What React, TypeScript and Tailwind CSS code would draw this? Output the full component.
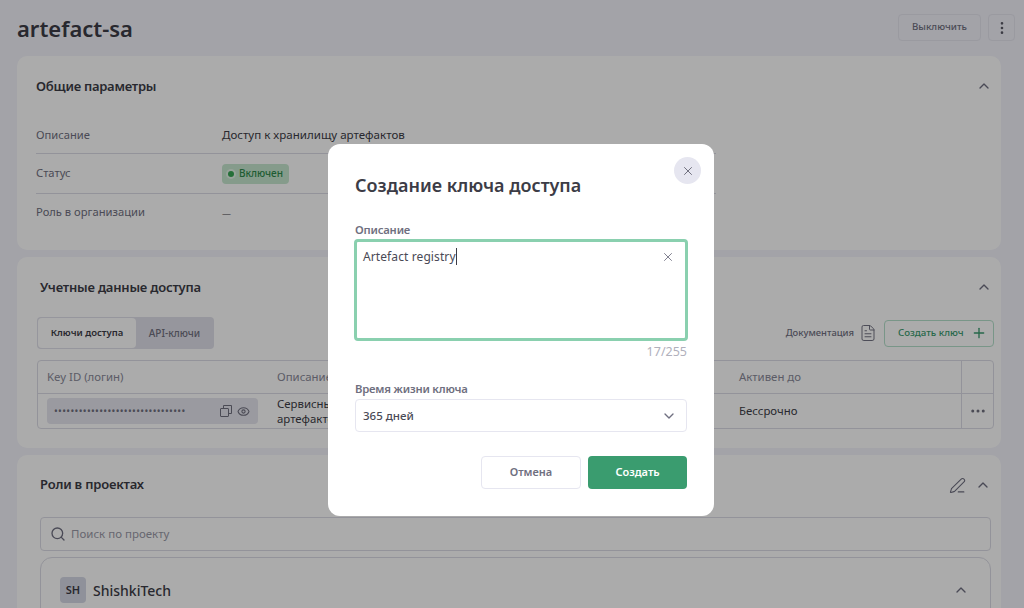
import React from 'react';
import { ChevronUp, ChevronDown, X, Plus, Search, PenLine, Eye, FileText, MoreVertical, MoreHorizontal } from 'lucide-react';

const font = "font-['Noto_Sans',sans-serif]";

const ParamRow = ({ label, children, className }: { label: string; children: React.ReactNode; className: string }) => (
  <div className={`flex items-center ${className}`}>
    <div className="w-[186px] text-[11.2px] text-[#6f6f80]">{label}</div>
    <div className="text-[11.55px] text-[#3c3c46]">{children}</div>
  </div>
);

export default function App() {
  return (
    <div className={`relative h-[608px] w-[1024px] overflow-hidden bg-[#f3f3fb] ${font}`}>
      <div className="pl-[17px]">
        {/* Шапка */}
        <div className="flex items-center justify-between h-[56px] pr-[9px]">
          <h1 className="text-[22px] font-semibold text-[#3c3c46]">artefact-sa</h1>
          <div className="flex gap-[7px] -mt-[1px]">
            <button className="h-[27px] w-[83px] rounded border border-[#e6e6ef] text-[9.7px] font-medium text-[#70707f]">Выключить</button>
            <button className="h-[27px] w-[27px] rounded border border-[#e6e6ef] flex items-center justify-center text-[#5a5a66]">
              <MoreVertical size={16} />
            </button>
          </div>
        </div>

        <div className="flex flex-col gap-[7px] w-[984px]">
          {/* Общие параметры */}
          <section className="h-[194px] rounded-[10px] bg-white pl-[19px] pr-[9px]">
            <div className="flex items-center justify-between h-[60px]">
              <h2 className="mt-[1px] text-[13px] tracking-[-0.25px] font-semibold text-[#3c3c46]">Общие параметры</h2>
              <ChevronUp size={16} className="text-[#6f6f80]" />
            </div>
            <div className="w-[680px]">
              <ParamRow label="Описание" className="h-[38px] pt-[1px] border-b border-[#dcdce6]">Доступ к хранилищу артефактов</ParamRow>
              <ParamRow label="Статус" className="h-[40px] border-b border-[#dcdce6]">
                <span className="inline-flex h-[20px] w-[67px] items-center gap-[5px] rounded bg-[#c6e8cf] px-[6px] text-[10px] font-medium text-[#2f8a4c]">
                  <span className="h-[6px] w-[6px] rounded-full bg-[#37a654] ring-2 ring-white/50" />
                  Включен
                </span>
              </ParamRow>
              <ParamRow label="Роль в организации" className="h-[37px]"><span className="text-[9px]">—</span></ParamRow>
            </div>
          </section>

          {/* Учетные данные */}
          <section className="h-[191px] rounded-[10px] bg-white pl-[20px] pr-[7px]">
            <div className="flex items-center justify-between h-[60px] pr-[2px]">
              <h2 className="ml-[3px] mt-[1px] text-[13px] tracking-[-0.2px] font-semibold text-[#3c3c46]">Учетные данные доступа</h2>
              <ChevronUp size={16} className="text-[#6f6f80]" />
            </div>
            <div className="flex items-center justify-between">
              <div className="flex h-[32px] w-[177px] rounded bg-[#e0e0ea] p-[1px]">
                <div className="flex w-[98px] items-center justify-center rounded-sm bg-white text-[9.5px] font-semibold text-[#3c3c46]">Ключи доступа</div>
                <div className="flex flex-1 items-center justify-center text-[10px] font-medium text-[#70707f]">API-ключи</div>
              </div>
              <div className="flex items-center">
                <span className="text-[9.4px] font-medium text-[#70707f]">Документация</span>
                <FileText size={18} className="ml-[5px] text-[#70707f]" strokeWidth={1.3} />
                <button className="ml-[7px] flex h-[27px] w-[110px] items-center gap-[7px] rounded border border-[#b5e0cb] pl-[13px] text-[9.7px] font-medium text-[#3a9c6f]">
                  Создать ключ
                  <Plus size={16} />
                </button>
              </div>
            </div>
            <div className="mt-[11px] rounded border border-[#dcdce6] text-[11.4px]">
              <div className="flex h-[33px] items-center border-b border-[#dcdce6] text-[#8a8a99]">
                <div className="w-[230px] pl-[9px]">Key ID (логин)</div>
                <div className="w-[462px] pl-[9px]">Описание</div>
                <div className="w-[231px] pl-[9px]">Активен до</div>
                <div className="h-full flex-1 border-l border-[#dcdce6]" />
              </div>
              <div className="flex h-[34px] items-center text-[#3c3c46]">
                <div className="w-[230px] pl-[9px]">
                  <div className="flex h-[26px] w-[211px] items-center justify-between rounded bg-[#e6e6ef] pl-[7px] pr-[8px] text-[#70707f]">
                    <span className="text-[10px] tracking-[0.35px] leading-none">••••••••••••••••••••••••••••••••</span>
                    <span className="flex items-center gap-[5px]">
                      <svg width="12" height="12" viewBox="0 0 12 12" fill="none" stroke="currentColor" strokeWidth="1">
                        <rect x="0.5" y="3.5" width="8" height="8" rx="0.5" />
                        <path d="M3.5 3.5V0.5H11.5V8.5H8.5" />
                      </svg>
                      <Eye size={13} />
                    </span>
                  </div>
                </div>
                <div className="w-[462px] pl-[9px] text-[11.4px] leading-[15px]">
                  <div>Сервисный</div>
                  <div>артефактов</div>
                </div>
                <div className="w-[231px] pl-[9px]">Бессрочно</div>
                <div className="flex h-full flex-1 items-center justify-center border-l border-[#dcdce6] text-[#70707f]">
                  <MoreHorizontal size={18} />
                </div>
              </div>
            </div>
          </section>

          {/* Роли в проектах */}
          <section className="h-[300px] rounded-[10px] bg-white pl-[23px] pr-[10px]">
            <div className="flex items-center justify-between h-[62px] pb-[2px]">
              <h2 className="text-[13px] tracking-[-0.2px] font-semibold text-[#3c3c46]">Роли в проектах</h2>
              <div className="flex items-center gap-[9px] text-[#6f6f80]">
                <PenLine size={17} strokeWidth={1.5} />
                <ChevronUp size={16} />
              </div>
            </div>
            <div className="flex h-[34px] items-center gap-[5px] rounded border border-[#dcdce6] pl-[9px] text-[11.5px] text-[#9a9aa8]">
              <Search size={16} className="text-[#6f6f80]" />
              Поиск по проекту
            </div>
            <div className="mt-[6px] h-[120px] rounded-xl border border-[#dcdce6] pl-[19px] pr-[21px] pt-[19px]">
              <div className="flex items-center justify-between">
                <div className="flex items-center gap-[7px]">
                  <span className="flex h-[26px] w-[26px] items-center justify-center rounded bg-[#d5d8e6] text-[11px] font-semibold text-[#3c3c46]">SH</span>
                  <span className="text-[14px] font-medium text-[#3c3c46]">ShishkiTech</span>
                </div>
                <ChevronUp size={16} className="text-[#6f6f80]" />
              </div>
            </div>
          </section>
        </div>
      </div>

      {/* Затемнение */}
      <div className="absolute inset-0 bg-black/[0.33]" />

      {/* Модальное окно */}
      <div className="absolute left-[328px] top-[144px] h-[372px] w-[386px] rounded-xl bg-white pl-[27px] pr-[27px]">
        <button className="absolute right-[13px] top-[13px] flex h-[27px] w-[27px] items-center justify-center rounded-full bg-[#e6e6f0] text-[#5f5f6e]">
          <X size={14} strokeWidth={1.5} />
        </button>
        <h3 className="pt-[28px] text-[18px] leading-[26px] font-semibold text-[#3c3c46]">Создание ключа доступа</h3>
        <label className="mt-[24px] block text-[11.3px] tracking-[-0.2px] leading-[16px] font-semibold text-[#6f6f80]">Описание</label>
        <div className="relative -mx-[1px] mt-[1px] h-[102px] rounded border-[3px] border-[#8ad0af] px-[6px] py-[6px] text-[12px] tracking-[0.1px] text-[#4a4a56]">
          <span className="border-r border-[#3c3c46]">Artefact registry</span>
          <X size={14} strokeWidth={1.5} className="absolute right-[10px] top-[8px] text-[#6f6f80]" />
        </div>
        <div className="mt-[3px] text-right text-[12.5px] leading-[15px] text-[#b0b0bc]">17/255</div>
        <label className="mt-[22px] block text-[11.3px] tracking-[-0.2px] leading-[16px] font-semibold text-[#6f6f80]">Время жизни ключа</label>
        <div className="mt-[2px] flex h-[33px] items-center justify-between rounded border border-[#e6e6f0] pl-[7px] pr-[9px] text-[11.5px] font-medium text-[#4a4a56]">
          365 дней
          <ChevronDown size={16} className="text-[#6f6f80]" />
        </div>
        <div className="mt-[24px] flex justify-end gap-[7px]">
          <button className="h-[33px] w-[100px] rounded border border-[#e6e6f0] text-[11px] font-semibold text-[#6f6f80]">Отмена</button>
          <button className="h-[33px] w-[99px] rounded bg-[#3a9c6f] text-[11px] font-semibold text-white">Создать</button>
        </div>
      </div>
    </div>
  );
}
